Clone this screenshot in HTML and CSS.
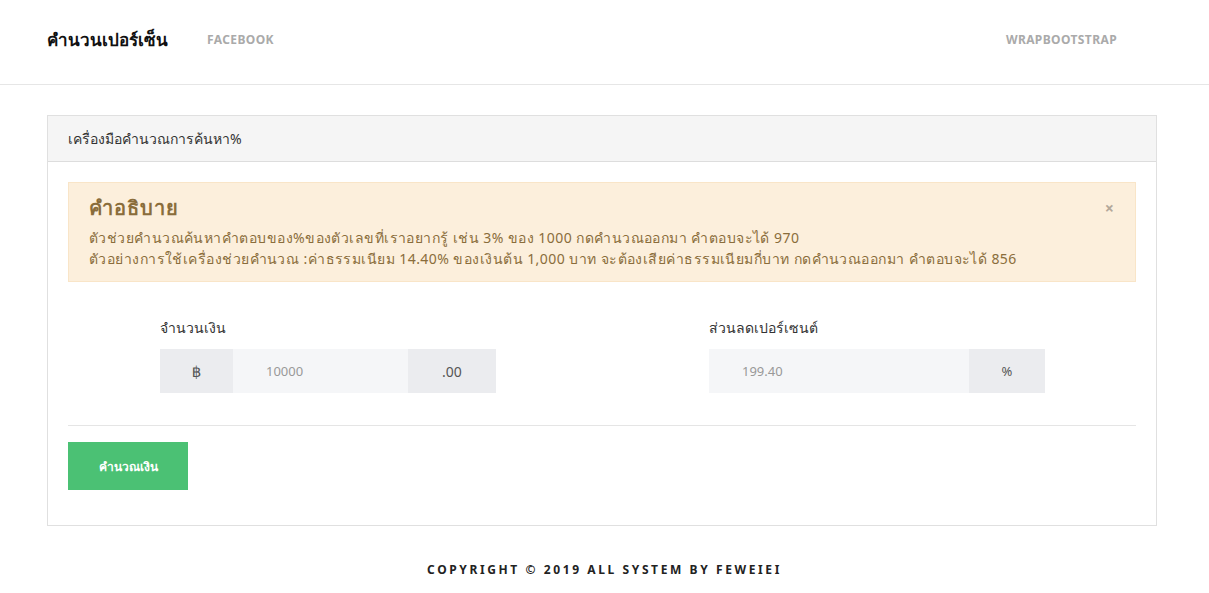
FILE: index.html
```html
<!DOCTYPE html>
<html lang="th">
<head>
<meta charset="utf-8">
<title>คำนวนเปอร์เซ็น</title>
<link rel="stylesheet" href="styles.css">
</head>
<body>
<header class="topbar">
  <div class="topbar-left">
    <a class="brand" href="#">คำนวนเปอร์เซ็น</a>
    <a class="nav-link" href="#">FACEBOOK</a>
  </div>
  <a class="nav-link nav-right" href="#">WRAPBOOTSTRAP</a>
</header>

<main class="page">
  <section class="card">
    <div class="card-head">เครื่องมือคำนวณการค้นหา%</div>
    <div class="card-body">
      <div class="alert">
        <span class="alert-close">×</span>
        <h2 class="alert-title">คำอธิบาย</h2>
        <p class="alert-line">ตัวช่วยคำนวณค้นหาคำตอบของ%ของตัวเลขที่เราอยากรู้ เช่น 3% ของ 1000 กดคำนวณออกมา คำตอบจะได้ 970</p>
        <p class="alert-line">ตัวอย่างการใช้เครื่องช่วยคำนวณ :ค่าธรรมเนียม 14.40% ของเงินต้น 1,000 บาท จะต้องเสียค่าธรรมเนียมกี่บาท กดคำนวณออกมา คำตอบจะได้ 856</p>
      </div>

      <div class="form-row">
        <div class="field">
          <label class="field-label">จำนวนเงิน</label>
          <div class="input-group">
            <span class="addon addon-baht">฿</span>
            <span class="input input-money">10000</span>
            <span class="addon addon-dec">.00</span>
          </div>
        </div>
        <div class="field">
          <label class="field-label">ส่วนลดเปอร์เซนต์</label>
          <div class="input-group">
            <span class="input input-pct">199.40</span>
            <span class="addon addon-pct">%</span>
          </div>
        </div>
      </div>

      <hr class="divider">
      <button class="btn-calc" type="button">คำนวณเงิน</button>
    </div>
  </section>
</main>

<footer class="footer">COPYRIGHT © 2019 ALL SYSTEM BY FEWEIEI</footer>
</body>
</html>
```
FILE: styles.css
```css
* { box-sizing: border-box; }
html, body { margin: 0; padding: 0; }
body {
  background: #fff;
  font-family: "Noto Sans", "DejaVu Sans", "Liberation Sans", sans-serif;
  color: #333;
}
a { text-decoration: none; }

.topbar {
  height: 85px;
  border-bottom: 1px solid #e6e6e6;
  display: flex;
  align-items: center;
  justify-content: space-between;
  padding: 0 92px 6px 47px;
}
.topbar-left { display: flex; align-items: center; gap: 39px; }
.brand {
  font-size: 17px;
  font-weight: 600;
  color: #111;
}
.nav-link {
  font-size: 12px;
  font-weight: 700;
  color: #aaa;
  letter-spacing: 0.4px;
}

.page { padding: 30px 52px 0 47px; }
.card {
  border: 1px solid #e0e0e0;
  background: #fff;
}
.card-head {
  height: 46px;
  background: #f5f5f5;
  border-bottom: 1px solid #ddd;
  padding: 0 20px;
  display: flex;
  align-items: center;
  font-size: 14px;
  color: #333;
}
.card-body { padding: 20px 20px 35px; }

.alert {
  position: relative;
  background: #fcefdc;
  border: 1px solid #f9e5c8;
  padding: 9px 20px 12px;
  color: #8a6d3b;
}
.alert-close {
  position: absolute;
  right: 21px;
  top: 14px;
  font-size: 16px;
  font-weight: 700;
  color: #b3a89a;
}
.alert-title {
  margin: 0 0 3px;
  font-size: 20px;
  font-weight: 700;
  color: #8a6d3b;
  letter-spacing: 1px;
}
.alert-line {
  margin: 0;
  font-size: 14px;
  line-height: 21px;
  letter-spacing: 0.45px;
}

.form-row {
  display: flex;
  justify-content: space-between;
  padding: 35px 91px 32px 92px;
}
.field { width: 336px; }
.field-label {
  display: block;
  font-size: 14px;
  color: #333;
  margin-bottom: 10px;
}
.input-group { display: flex; height: 44px; }
.addon, .input {
  display: flex;
  align-items: center;
  font-size: 13px;
}
.addon {
  background: #ebecef;
  justify-content: center;
  color: #555;
}
.input {
  background: #f5f6f8;
  color: #999;
  padding-left: 33px;
}
.addon-baht { width: 73px; font-size: 15px; }
.input-money { width: 175px; }
.addon-dec { width: 88px; font-size: 14px; }
.input-pct { width: 260px; }
.addon-pct { width: 76px; }

.divider {
  border: 0;
  border-top: 1px solid #e5e5e5;
  margin: 0 0 16px;
}
.btn-calc {
  width: 120px;
  height: 48px;
  border: 0;
  background: #4bc174;
  color: #fff;
  font-family: inherit;
  font-size: 12px;
  font-weight: 700;
}

.footer {
  text-align: center;
  padding-top: 35px;
  font-size: 12px;
  font-weight: 700;
  letter-spacing: 2.6px;
  color: #222;
}
```
